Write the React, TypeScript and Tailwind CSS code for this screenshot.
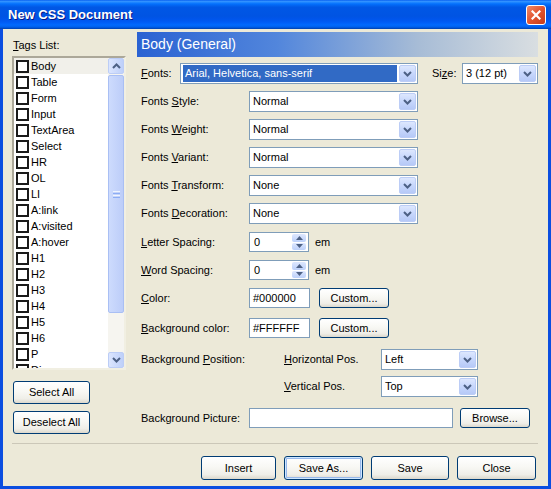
import React from 'react'

const TAGS = [
  'Body', 'Table', 'Form', 'Input', 'TextArea', 'Select', 'HR', 'OL', 'LI',
  'A:link', 'A:visited', 'A:hover', 'H1', 'H2', 'H3', 'H4', 'H5', 'H6', 'P', 'Div',
]

function ChevronDown() {
  return (
    <svg width="9" height="6" viewBox="0 0 9 6">
      <path d="M1 1l3.5 3.5L8 1" fill="none" stroke="#4d6185" strokeWidth="2" />
    </svg>
  )
}

function ChevronUp() {
  return (
    <svg width="9" height="6" viewBox="0 0 9 6">
      <path d="M1 5l3.5-3.5L8 5" fill="none" stroke="#4d6185" strokeWidth="2" />
    </svg>
  )
}

function DropBtn() {
  return (
    <div className="flex h-full w-[17px] items-center justify-center rounded-[2px] border border-[#bccdf6] bg-[linear-gradient(to_bottom,#dde7fe,#c7d7fc_50%,#b6c9f7)]">
      <ChevronDown />
    </div>
  )
}

function Select({ value, className, active }: { value: string; className: string; active?: boolean }) {
  return (
    <div className={`flex h-[21px] items-stretch border border-[#7f9db9] bg-white p-px ${className}`}>
      <div className={`flex flex-1 items-center overflow-hidden whitespace-nowrap pl-[2px] ${active ? 'mr-[2px] ml-[1px] bg-[#316ac5] text-white' : ''}`}>
        {value}
      </div>
      <DropBtn />
    </div>
  )
}

function TextBox({ value, className }: { value?: string; className: string }) {
  return (
    <div className={`flex h-[20px] items-center border border-[#7f9db9] bg-white pl-[3px] ${className}`}>
      {value}
    </div>
  )
}

function Spin() {
  return (
    <div className="flex h-[20px] w-[60px] items-stretch border border-[#7f9db9] bg-white p-px">
      <div className="flex flex-1 items-center pl-[3px]">0</div>
      <div className="mr-[1px] flex w-[14px] flex-col gap-px">
        <div className="flex flex-1 items-center justify-center rounded-[2px] bg-[linear-gradient(to_bottom,#dde7fe,#bcd0fa)]">
          <svg width="7" height="4" viewBox="0 0 7 4"><path d="M0 4L3.5 0L7 4z" fill="#4d6185" /></svg>
        </div>
        <div className="flex flex-1 items-center justify-center rounded-[2px] bg-[linear-gradient(to_bottom,#dde7fe,#bcd0fa)]">
          <svg width="7" height="4" viewBox="0 0 7 4"><path d="M0 0L3.5 4L7 0z" fill="#4d6185" /></svg>
        </div>
      </div>
    </div>
  )
}

function XPButton({ children, className = '', focused = false }: { children: React.ReactNode; className?: string; focused?: boolean }) {
  return (
    <button
      className={`flex items-center justify-center rounded-[3px] border border-[#003c74] bg-[linear-gradient(to_bottom,#ffffff_0%,#f8f8f4_45%,#efeee8_80%,#dcd8cc_100%)] text-[11px] text-black ${focused ? 'shadow-[inset_0_0_0_1px_#cee7ff,inset_0_0_0_2px_#98b8ea]' : ''} ${className}`}
    >
      {children}
    </button>
  )
}

function Label({ children, className = '' }: { children: React.ReactNode; className?: string }) {
  return <div className={`shrink-0 whitespace-nowrap ${className}`}>{children}</div>
}

function U({ children }: { children: React.ReactNode }) {
  return <span className="underline underline-offset-[1px]">{children}</span>
}

function TagList() {
  return (
    <div className="mt-[5px] flex h-[314px] border-2 border-t-[#aca899] border-l-[#aca899] border-b-[#f1efe2] border-r-[#f1efe2] bg-white">
      <div className="flex-1 overflow-hidden">
        {TAGS.map((t, i) => (
          <div key={t} className={`flex h-[16px] items-center gap-[2px] pl-[2px] ${i === 0 ? 'bg-[#f1f0ea]' : ''}`}>
            <div className="h-[13px] w-[13px] shrink-0 border-2 border-[#1a1a1a] bg-white" />
            <span>{t}</span>
          </div>
        ))}
      </div>
      <div className="flex w-[16px] flex-col bg-[#f6f5f0]">
        <div className="flex h-[16px] items-center justify-center rounded-[2px] border border-[#bccdf6] bg-[linear-gradient(to_right,#dbe5fe,#bed0fa)]">
          <ChevronUp />
        </div>
        <div className="mt-px flex h-[238px] items-center justify-center rounded-[2px] border border-[#a9bff4] bg-[linear-gradient(to_right,#cddbfd,#bccdf9)]">
          <div className="flex w-[7px] flex-col gap-px">
            <div className="h-px bg-[#eef4fe]" />
            <div className="h-px bg-[#8cadf4]" />
            <div className="h-px bg-[#eef4fe]" />
            <div className="h-px bg-[#8cadf4]" />
          </div>
        </div>
        <div className="flex-1" />
        <div className="flex h-[16px] items-center justify-center rounded-[2px] border border-[#bccdf6] bg-[linear-gradient(to_right,#dbe5fe,#bed0fa)]">
          <ChevronDown />
        </div>
      </div>
    </div>
  )
}

export default function App() {
  return (
    <div className="flex h-[489px] w-[551px] flex-col overflow-hidden font-['Liberation_Sans',Arial,sans-serif] text-[11px] text-black">
      {/* title bar */}
      <div className="flex h-[29px] shrink-0 items-center justify-between bg-[linear-gradient(to_bottom,#0058ee_0%,#3593ff_4%,#288eff_7%,#127dff_10%,#036ffc_14%,#0262ee_20%,#0057e5_25%,#0054e3_56%,#0055eb_66%,#005bf5_76%,#026afe_86%,#0062ef_92%,#0052d6_96%,#0040ab_100%)] pl-[8px] pr-[5px]">
        <span className="text-[13px] font-bold text-white [text-shadow:1px_1px_0_#0a1883]">New CSS Document</span>
        <div className="flex h-[20px] w-[20px] items-center justify-center rounded-[3px] border border-white bg-[linear-gradient(135deg,#f08a68,#e2542f_50%,#c53b18)]">
          <svg width="10" height="10" viewBox="0 0 10 10">
            <path d="M1.5 1.5l7 7M8.5 1.5l-7 7" stroke="white" strokeWidth="2.2" strokeLinecap="square" />
          </svg>
        </div>
      </div>

      {/* body */}
      <div className="flex flex-1 flex-col border-x-[3px] border-b-[3px] border-[#0b4ee0] bg-[#ece9d8] pl-[9px] pr-[10px] pt-[3px]">
        <div className="flex gap-[11px]">
          {/* left column */}
          <div className="flex w-[114px] flex-col">
            <div className="mt-[7px] h-[12px] pl-px leading-[12px]"><U>T</U>ags List:</div>
            <TagList />
            <XPButton className="ml-px mt-[11px] h-[23px] w-[77px]">Select All</XPButton>
            <XPButton className="ml-px mt-[7px] h-[23px] w-[77px]">Deselect All</XPButton>
          </div>

          {/* right column */}
          <div className="flex w-[401px] flex-col">
            <div className="flex h-[25px] items-center bg-[linear-gradient(to_right,#2a62d2_0%,#5286dc_35%,#a7bcd6_70%,#d9dee1_100%)] pl-[4px] text-[14px] text-white">
              Body (General)
            </div>

            <div className="mt-[6px] flex items-center pl-[4px]">
              <Label className="w-[39px]"><U>F</U>onts:</Label>
              <Select value="Arial, Helvetica, sans-serif" className="w-[238px]" active />
              <Label className="ml-[14px] w-[30px]">Si<U>z</U>e:</Label>
              <Select value="3 (12 pt)" className="w-[76px]" />
            </div>

            <div className="mt-[7px] flex items-center pl-[4px]">
              <Label className="w-[108px]">Fonts <U>S</U>tyle:</Label>
              <Select value="Normal" className="w-[169px]" />
            </div>
            <div className="mt-[7px] flex items-center pl-[4px]">
              <Label className="w-[108px]">Fonts <U>W</U>eight:</Label>
              <Select value="Normal" className="w-[169px]" />
            </div>
            <div className="mt-[7px] flex items-center pl-[4px]">
              <Label className="w-[108px]">Fonts <U>V</U>ariant:</Label>
              <Select value="Normal" className="w-[169px]" />
            </div>
            <div className="mt-[7px] flex items-center pl-[4px]">
              <Label className="w-[108px]">Fonts <U>T</U>ransform:</Label>
              <Select value="None" className="w-[169px]" />
            </div>
            <div className="mt-[7px] flex items-center pl-[4px]">
              <Label className="w-[108px]">Fonts <U>D</U>ecoration:</Label>
              <Select value="None" className="w-[169px]" />
            </div>

            <div className="mt-[8px] flex items-center pl-[4px]">
              <Label className="w-[108px]"><U>L</U>etter Spacing:</Label>
              <Spin />
              <span className="ml-[6px]">em</span>
            </div>
            <div className="mt-[8px] flex items-center pl-[4px]">
              <Label className="w-[108px]"><U>W</U>ord Spacing:</Label>
              <Spin />
              <span className="ml-[6px]">em</span>
            </div>

            <div className="mt-[8px] flex items-center pl-[4px]">
              <Label className="w-[108px]"><U>C</U>olor:</Label>
              <TextBox value="#000000" className="w-[61px]" />
              <XPButton className="ml-[9px] h-[20px] w-[70px]">Custom...</XPButton>
            </div>
            <div className="mt-[10px] flex items-center pl-[4px]">
              <Label className="w-[108px]"><U>B</U>ackground color:</Label>
              <TextBox value="#FFFFFF" className="w-[61px]" />
              <XPButton className="ml-[9px] h-[20px] w-[70px]">Custom...</XPButton>
            </div>

            <div className="mt-[11px] flex items-center pl-[4px]">
              <Label className="w-[143px]">Background <U>P</U>osition:</Label>
              <Label className="w-[97px]"><U>H</U>orizontal Pos.</Label>
              <Select value="Left" className="w-[97px]" />
            </div>
            <div className="mt-[6px] flex items-center pl-[4px]">
              <div className="w-[143px]" />
              <Label className="w-[97px]"><U>V</U>ertical Pos.</Label>
              <Select value="Top" className="w-[97px]" />
            </div>

            <div className="mt-[11px] flex items-center pl-[4px]">
              <Label className="w-[108px]">Background Picture:</Label>
              <TextBox className="w-[204px]" />
              <XPButton className="ml-[7px] h-[20px] w-[70px]">Browse...</XPButton>
            </div>
          </div>
        </div>

        <div className="mt-[9px] h-px bg-[#cbc7b8]" />

        <div className="mt-[12px] flex justify-end gap-[8px] pr-[2px]">
          <XPButton className="h-[24px] w-[75px]">Insert</XPButton>
          <XPButton className="h-[24px] w-[79px]" focused>Save As...</XPButton>
          <XPButton className="h-[24px] w-[78px]">Save</XPButton>
          <XPButton className="h-[24px] w-[79px]">Close</XPButton>
        </div>
      </div>
    </div>
  )
}
